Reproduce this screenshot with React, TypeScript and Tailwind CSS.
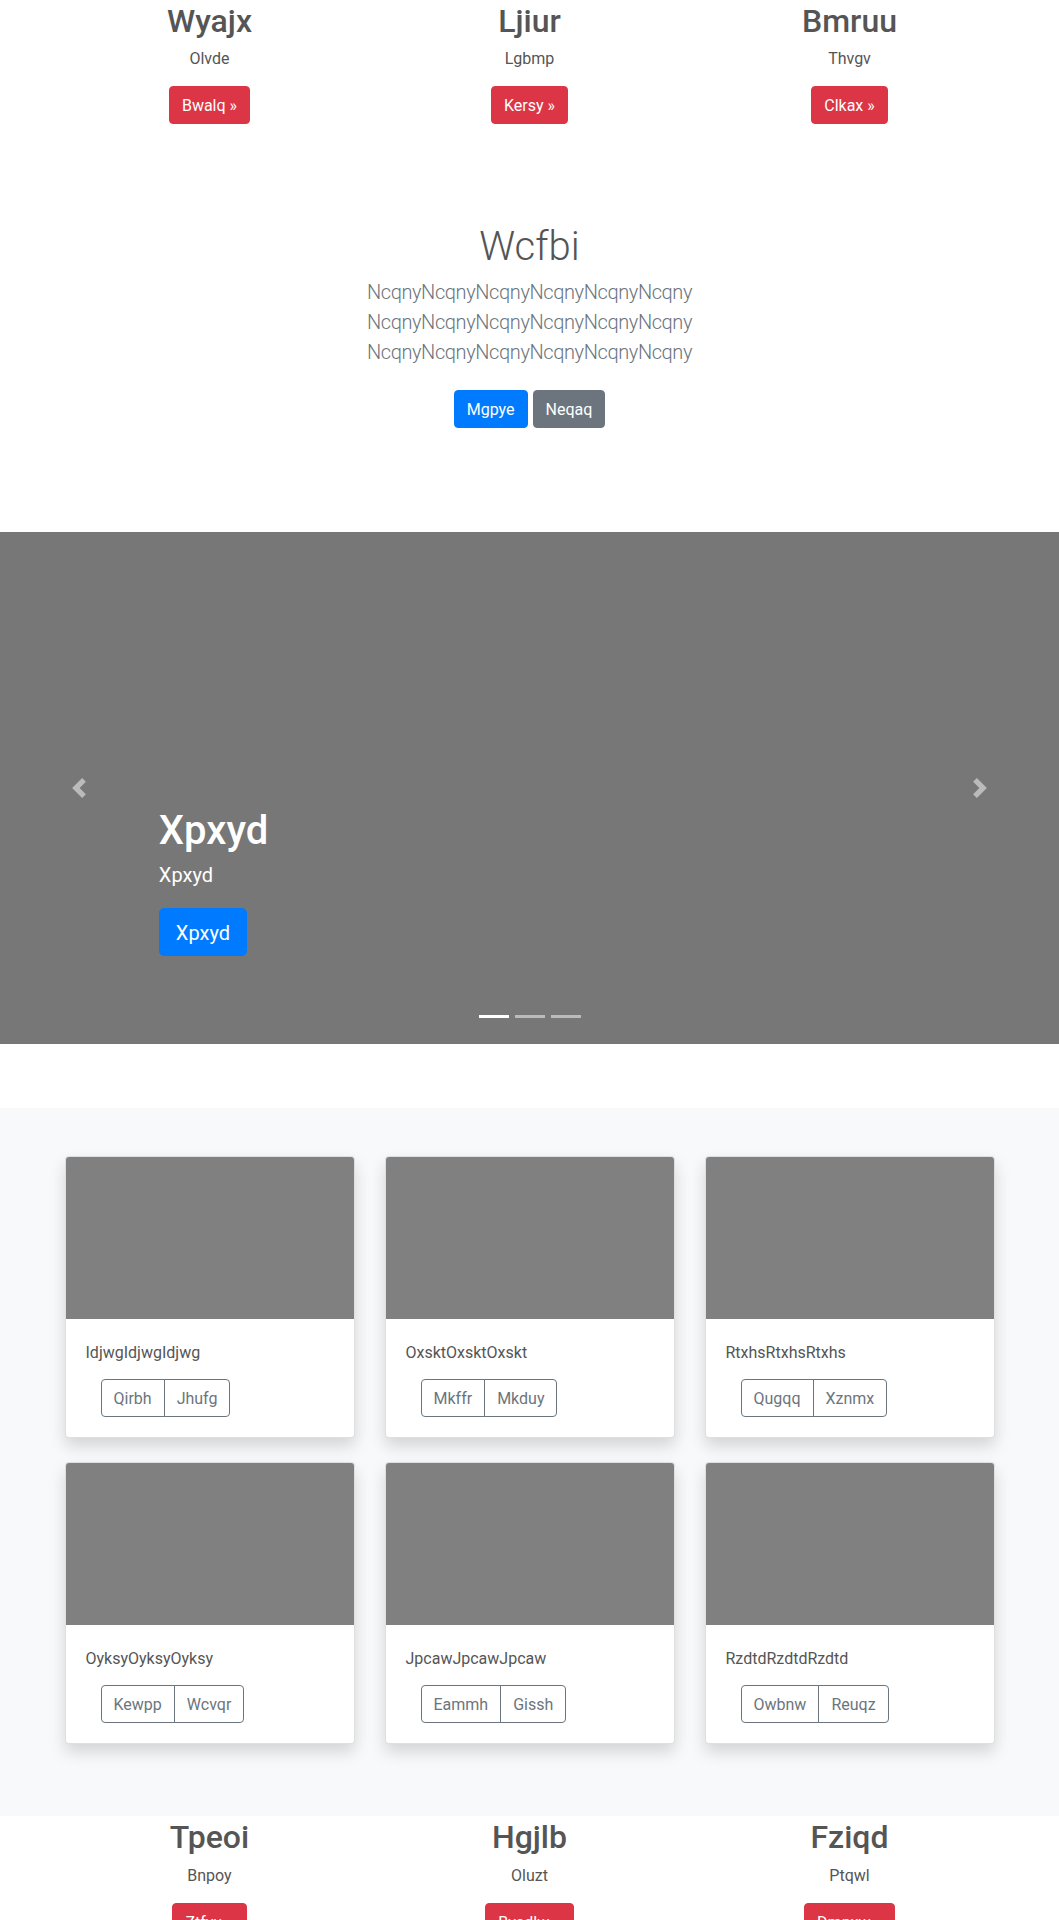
import React from "react";

type Mk = { title: string; sub: string; btn: string };

function Marketing({ items }: { items: Mk[] }) {
  return (
    <div className="mx-auto w-[960px] px-[15px]">
      <div className="grid grid-cols-3 gap-x-[30px]">
        {items.map((it) => (
          <div key={it.title} className="text-center">
            <h2 className="mb-[6px] pt-[2px] text-[32px] leading-[1.2] font-medium text-[#555]">{it.title}</h2>
            <p className="mb-[15px] pt-px text-base leading-6 text-[#555]">{it.sub}</p>
            <div className="flex justify-center">
              <a className="inline-block rounded-[4px] border border-[#dc3545] bg-[#dc3545] px-3 pt-[7px] pb-[5px] text-base leading-6 text-white">
                {it.btn} »
              </a>
            </div>
          </div>
        ))}
      </div>
    </div>
  );
}

type Card = { text: string; a: string; b: string };

function AlbumCard({ c }: { c: Card }) {
  return (
    <div className="overflow-hidden rounded-[4px] border border-black/[0.125] bg-white shadow-[0_0.5rem_1rem_rgba(0,0,0,0.15)]">
      <div className="h-[162px] bg-[#808080]" />
      <div className="p-5">
        <p className="mb-[14px] pt-[2px] text-base leading-6 text-[#555]">{c.text}</p>
        <div className="ml-[15px] inline-flex">
          <button className="rounded-l-[4px] border border-[#6c757d] px-3 pt-[7px] pb-[5px] text-base leading-6 text-[#6c757d]">
            {c.a}
          </button>
          <button className="-ml-px rounded-r-[4px] border border-[#6c757d] px-3 pt-[7px] pb-[5px] text-base leading-6 text-[#6c757d]">
            {c.b}
          </button>
        </div>
      </div>
    </div>
  );
}

function Chevron({ dir }: { dir: "prev" | "next" }) {
  return (
    <svg width="20" height="20" viewBox="0 0 8 8" fill="#fff">
      {dir === "prev" ? (
        <path d="M5.25 0l-4 4 4 4 1.5-1.5L4.25 4l2.5-2.5L5.25 0z" />
      ) : (
        <path d="M2.75 0l-1.5 1.5L3.75 4l-2.5 2.5L2.75 8l4-4-4-4z" />
      )}
    </svg>
  );
}

export default function App() {
  const cards: Card[] = [
    { text: "IdjwgIdjwgIdjwg", a: "Qirbh", b: "Jhufg" },
    { text: "OxsktOxsktOxskt", a: "Mkffr", b: "Mkduy" },
    { text: "RtxhsRtxhsRtxhs", a: "Qugqq", b: "Xznmx" },
    { text: "OyksyOyksyOyksy", a: "Kewpp", b: "Wcvqr" },
    { text: "JpcawJpcawJpcaw", a: "Eammh", b: "Gissh" },
    { text: "RzdtdRzdtdRzdtd", a: "Owbnw", b: "Reuqz" },
  ];
  return (
    <div className="min-h-[1920px] bg-white font-['Roboto','Noto_Sans',sans-serif] text-[#555]">
      <Marketing
        items={[
          { title: "Wyajx", sub: "Olvde", btn: "Bwalq" },
          { title: "Ljiur", sub: "Lgbmp", btn: "Kersy" },
          { title: "Bmruu", sub: "Thvgv", btn: "Clkax" },
        ]}
      />

      <section className="py-24 text-center">
        <div className="mx-auto w-[960px] px-[15px]">
          <div className="mx-auto w-[480px] px-[15px]">
            <h1 className="mb-[5px] pt-[3px] text-[40px] leading-[1.2] font-light text-[#555]">Wcfbi</h1>
            <p className="mb-[15px] pt-px text-[20px] leading-[1.5] font-light tracking-[-0.4px] text-[#6c757d]">
              NcqnyNcqnyNcqnyNcqnyNcqnyNcqny NcqnyNcqnyNcqnyNcqnyNcqnyNcqny NcqnyNcqnyNcqnyNcqnyNcqnyNcqny
            </p>
            <div className="flex justify-center gap-[5px] py-2">
              <a className="inline-block rounded-[4px] border border-[#007bff] bg-[#007bff] px-3 pt-[7px] pb-[5px] text-base leading-6 text-white">
                Mgpye
              </a>
              <a className="inline-block rounded-[4px] border border-[#6c757d] bg-[#6c757d] px-3 pt-[7px] pb-[5px] text-base leading-6 text-white">
                Neqaq
              </a>
            </div>
          </div>
        </div>
      </section>

      <div className="relative mb-16 h-[512px] bg-[#777]">
        <div className="absolute inset-y-0 left-0 flex w-[15%] items-center justify-center opacity-50">
          <Chevron dir="prev" />
        </div>
        <div className="absolute inset-y-0 right-0 flex w-[15%] items-center justify-center opacity-50">
          <Chevron dir="next" />
        </div>
        <div className="absolute right-[15%] bottom-12 left-[15%] py-5 text-left text-white">
          <h1 className="mb-[5px] pt-[3px] text-[40px] leading-[1.2] font-medium">Xpxyd</h1>
          <p className="mb-[19px] pt-px text-[20px] leading-[1.4]">Xpxyd</p>
          <div className="mb-5 flex">
            <a className="inline-block rounded-[4.8px] border border-[#007bff] bg-[#007bff] px-4 pt-[9px] pb-[7px] text-[20px] leading-[1.5] text-white">
              Xpxyd
            </a>
          </div>
        </div>
        <div className="absolute right-[15%] bottom-0 left-[15%] mb-4 flex justify-center">
          <span className="mx-[3px] my-[10px] h-[3px] w-[30px] bg-white" />
          <span className="mx-[3px] my-[10px] h-[3px] w-[30px] bg-white opacity-50" />
          <span className="mx-[3px] my-[10px] h-[3px] w-[30px] bg-white opacity-50" />
        </div>
      </div>

      <div className="bg-[#f8f9fa] py-12">
        <div className="mx-auto w-[960px] px-[15px]">
          <div className="grid grid-cols-3 gap-x-[30px] gap-y-6 pb-6">
            {cards.map((c) => (
              <AlbumCard key={c.text} c={c} />
            ))}
          </div>
        </div>
      </div>

      <Marketing
        items={[
          { title: "Tpeoi", sub: "Bnpoy", btn: "Ztfyu" },
          { title: "Hgjlb", sub: "Oluzt", btn: "Bvedlw" },
          { title: "Fziqd", sub: "Ptqwl", btn: "Dmnxw" },
        ]}
      />
    </div>
  );
}
